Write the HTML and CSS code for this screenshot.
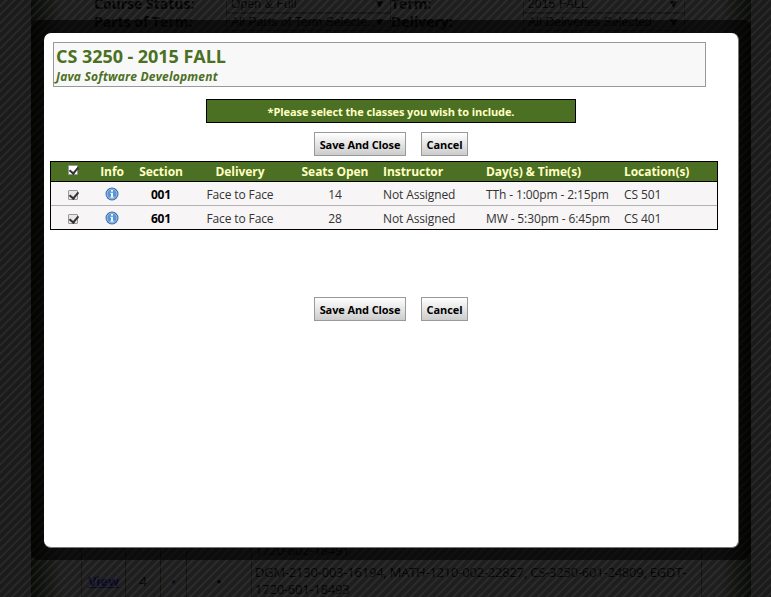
FILE: index.html
```html
<!DOCTYPE html>
<html lang="en">
<head>
<meta charset="utf-8">
<title>CS 3250 - 2015 FALL</title>
<link rel="stylesheet" href="styles.css">
</head>
<body>
<svg class="defs" width="0" height="0" aria-hidden="true">
  <defs>
    <symbol id="info" viewBox="0 0 14 14">
      <circle cx="7" cy="7" r="6.5" fill="#3a6fb0"/>
      <circle cx="7" cy="7" r="5" fill="#5b94d2" stroke="#a9c9ea" stroke-width=".9"/>
      <path d="M6 3h2v1.8H6zM5.4 5.8H8v4h.8v1H5.2v-1H6V6.8h-.6z" fill="#eef5fc"/>
    </symbol>
  </defs>
</svg>
<main class="page">
  <section class="filters">
    <b>Course Status:</b><span class="select">Open &amp; Full<i>▼</i></span>
    <b>Term:</b><span class="select">2015 FALL<i>▼</i></span>
    <b>Parts of Term:</b><span class="select">All Parts of Term Selecte..<i>▼</i></span>
    <b>Delivery:</b><span class="select">All Deliveries Selected<i>▼</i></span>
  </section>
  <section class="schedules">
    <span></span><span></span><span></span><span></span>
    <span class="codes previous">1720-602-18491</span>
    <span class="view"><a href="#">View</a></span><span>4</span><span class="small blue">●</span><span class="small">●</span>
    <span class="codes">DGM-2130-003-16194, MATH-1210-002-22827, CS-3250-601-24809, EGDT-1720-601-18493</span>
  </section>
</main>
<div class="overlay"></div>
<div class="halo">
  <div class="dialog">
    <header class="course">
      <h1>CS 3250 - 2015 FALL</h1>
      <h2>Java Software Development</h2>
    </header>
    <p class="notice">*Please select the classes you wish to include.</p>
    <div class="actions"><button>Save And Close</button><button>Cancel</button></div>
    <div class="table">
      <div class="row head">
        <span><input type="checkbox" checked></span><span>Info</span><span>Section</span><span>Delivery</span><span>Seats Open</span><span>Instructor</span><span>Day(s) &amp; Time(s)</span><span>Location(s)</span>
      </div>
      <div class="row">
        <span><input type="checkbox" checked></span><span><svg class="info"><use href="#info"/></svg></span><b>001</b><span>Face to Face</span><span>14</span><span>Not Assigned</span><span>TTh - 1:00pm - 2:15pm</span><span>CS 501</span>
      </div>
      <div class="row">
        <span><input type="checkbox" checked></span><span><svg class="info"><use href="#info"/></svg></span><b>601</b><span>Face to Face</span><span>28</span><span>Not Assigned</span><span>MW - 5:30pm - 6:45pm</span><span>CS 401</span>
      </div>
    </div>
    <div class="actions bottom"><button>Save And Close</button><button>Cancel</button></div>
  </div>
</div>
</body>
</html>
```
FILE: styles.css
```css
* { box-sizing: border-box; }
body {
  margin: 0;
  width: 771px;
  height: 597px;
  overflow: hidden;
  position: relative;
  background: #1f1f1f;
  font-family: "Open Sans", sans-serif;
}
.defs { position: absolute; }
.page {
  width: 720px;
  height: 597px;
  margin-left: 31px;
  display: flex;
  flex-direction: column;
  justify-content: space-between;
  overflow: hidden;
  background: linear-gradient(90deg, #0a0d07, #232323 30px, #232323 690px, #0a0d07);
  color: #040404;
}
.filters {
  display: grid;
  grid-template-columns: 132px 165px 132px 162px;
  grid-auto-rows: 18px;
  margin: -5px 0 0 63px;
  font-size: 14px;
  line-height: 18px;
}
.select {
  display: flex;
  justify-content: space-between;
  padding: 0 7px 0 4px;
  border: 1px solid #171717;
  font: 12px/16px "Liberation Sans", sans-serif;
  letter-spacing: .2px;
  white-space: nowrap;
}
.select i { font: 9px/17px "DejaVu Sans", sans-serif; }
.schedules {
  display: grid;
  grid-template-columns: 44px 35px 26px 65px 450px;
  grid-template-rows: 22px 33px;
  margin-left: 50px;
  border-left: 1px solid #141414;
  font-size: 13px;
}
.schedules > span {
  display: flex;
  align-items: center;
  justify-content: center;
  border-right: 1px solid #141414;
}
.schedules .codes {
  display: block;
  padding-left: 3px;
  line-height: 17px;
  letter-spacing: -.22px;
}
.schedules .previous { line-height: 16px; }
.schedules .small { font-size: 8px; }
.schedules .blue { color: #0b0b20; }
.view a { color: #08082a; font-weight: 700; }
.overlay {
  position: absolute;
  inset: 0;
  background: repeating-linear-gradient(135deg, rgba(0,0,0,.14) 0 3px, rgba(70,70,70,.24) 4px 5px, rgba(0,0,0,.14) 6px);
}
.halo {
  position: absolute;
  left: 31px;
  top: 20px;
  width: 720px;
  height: 540px;
  padding: 13px 12px 12px 13px;
  border-radius: 8px;
  background: rgba(0,0,0,.6);
}
.dialog {
  height: 515px;
  padding: 9px 20px 0 6px;
  border-radius: 7px;
  background: #fff;
  border: 1px solid #777;
  border-width: 0 1px 1px 0;
}
.course {
  width: 653px;
  height: 45px;
  margin-left: 3px;
  padding: 2px 2px 0;
  border: 1px solid #999;
  background: #f8f8f8;
  color: #4b7023;
}
.course h1 { margin: 0; font-size: 18px; line-height: 23px; letter-spacing: -.05px; }
.course h2 { margin: 1px 0 0; font-size: 12px; line-height: 16px; font-style: italic; letter-spacing: .2px; }
.notice {
  width: 370px;
  height: 24px;
  margin: 12px 0 9px 156px;
  border: 1px solid #000;
  background: #4b7023;
  color: #ffffc4;
  font-size: 11px;
  font-weight: 700;
  letter-spacing: -.1px;
  line-height: 23px;
  text-align: center;
}
.actions {
  display: flex;
  gap: 15px;
  margin-left: 264px;
}
button {
  width: 92px;
  height: 24px;
  padding: 1px 0 0;
  border: 1px solid #999;
  background: linear-gradient(#fff, #ccc);
  color: #000;
  font: 700 11px/20px "Open Sans", sans-serif;
  letter-spacing: -.1px;
  white-space: nowrap;
}
button + button { width: 47px; }
.table {
  width: 668px;
  margin-top: 5px;
  border: 1px solid #000;
  background: #f7f5f6;
  color: #333;
  font-size: 12px;
}
.row {
  display: grid;
  grid-template-columns: 44px 34px 64px 94px 96px 103px 138px 93px;
  height: 24px;
  line-height: 26px;
  letter-spacing: -.12px;
  text-align: center;
  white-space: nowrap;
  border-bottom: 1px solid #b2b2b2;
}
.row:last-child { height: 23px; border-bottom: 0; }
.row > :nth-child(n+6) { text-align: left; }
.row b { color: #000; }
.row.head {
  height: 20px;
  line-height: 19px;
  border-bottom: 1px solid #000;
  background: #4b7023;
  color: #ffffc4;
  font-weight: 700;
  letter-spacing: -.05px;
}
input {
  appearance: none;
  display: block;
  width: 10px;
  height: 10px;
  margin: 8px auto 0;
  border: 1px solid #999;
  border-radius: 1px;
  background: #e8e8e8;
}
.head input { margin-top: 3px; background: #fff; }
input::after {
  content: "";
  display: block;
  width: 4px;
  height: 7px;
  margin: 0 0 0 2px;
  border: solid #333;
  border-width: 0 2px 2px 0;
  transform: translateY(-1px) rotate(40deg);
}
.info { display: block; width: 14px; height: 14px; margin: 5px 10px 0; }
.bottom { margin-top: 67px; }
```
